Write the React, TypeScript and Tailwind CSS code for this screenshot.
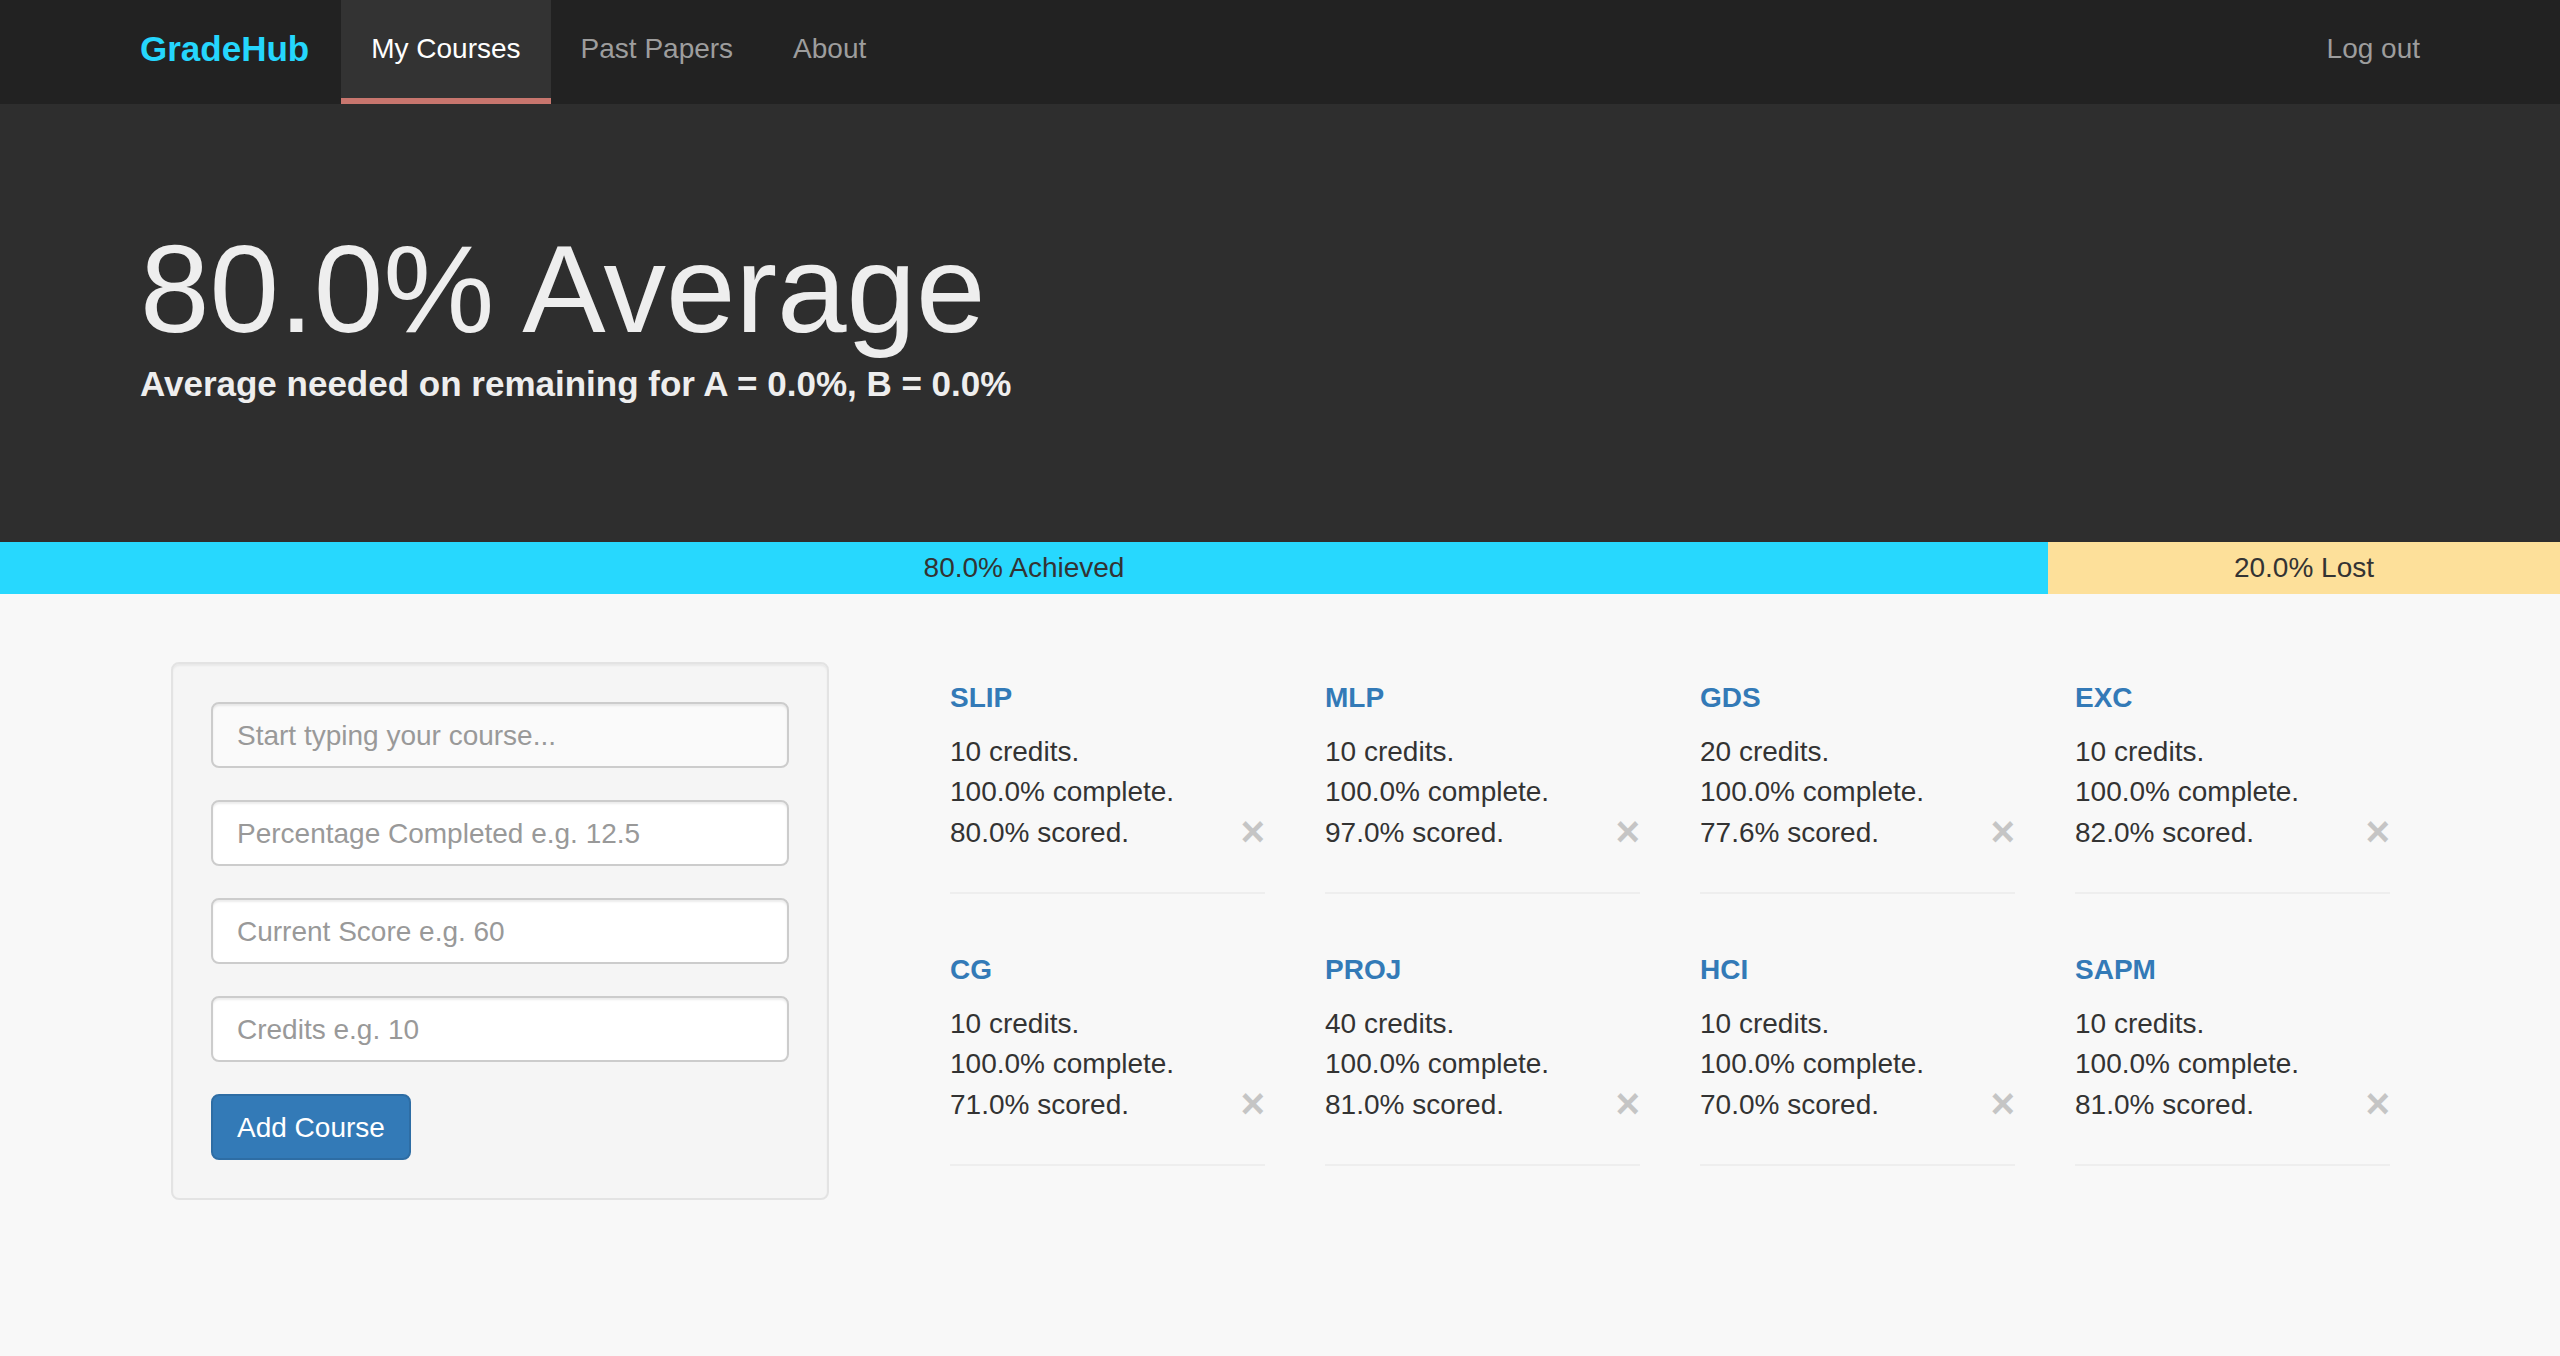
import React from 'react';

type Course = {
  code: string;
  credits: number;
  complete: string;
  scored: string;
};

const COURSES: Course[] = [
  { code: 'SLIP', credits: 10, complete: '100.0', scored: '80.0' },
  { code: 'MLP', credits: 10, complete: '100.0', scored: '97.0' },
  { code: 'GDS', credits: 20, complete: '100.0', scored: '77.6' },
  { code: 'EXC', credits: 10, complete: '100.0', scored: '82.0' },
  { code: 'CG', credits: 10, complete: '100.0', scored: '71.0' },
  { code: 'PROJ', credits: 40, complete: '100.0', scored: '81.0' },
  { code: 'HCI', credits: 10, complete: '100.0', scored: '70.0' },
  { code: 'SAPM', credits: 10, complete: '100.0', scored: '81.0' },
];

const NAV_LINKS = [
  { label: 'My Courses', active: true },
  { label: 'Past Papers', active: false },
  { label: 'About', active: false },
];

const FIELDS = [
  { placeholder: 'Start typing your course...', tinted: true },
  { placeholder: 'Percentage Completed e.g. 12.5', tinted: false },
  { placeholder: 'Current Score e.g. 60', tinted: false },
  { placeholder: 'Credits e.g. 10', tinted: false },
];

function CourseCard({ course }: { course: Course }) {
  return (
    <div className="px-[30px] mb-[56px]">
      <h4 className="text-[28px] leading-[40px] font-semibold text-[#337ab7] mb-[14px]">{course.code}</h4>
      <p className="text-[28px] leading-[40px] text-[#333]">{course.credits} credits.</p>
      <p className="text-[28px] leading-[40px] text-[#333]">{course.complete}% complete.</p>
      <div className="flex justify-between h-[40px]">
        <p className="text-[28px] leading-[40px] text-[#333] pt-[1px]">{course.scored}% scored.</p>
        <button className="text-[42px] leading-[40px] font-bold text-black opacity-20">×</button>
      </div>
      <hr className="mt-[40px] border-0 border-t-2 border-[#eeeeee]" />
    </div>
  );
}

export default function App() {
  return (
    <div className="min-h-screen bg-[#f8f8f8] font-['Liberation_Sans',Arial,sans-serif]">
      {/* Navbar */}
      <nav className="bg-[#222222] h-[104px]">
        <div className="w-[2340px] mx-auto px-[30px] h-full flex items-stretch">
          <a className="flex items-center pr-[32px] pb-[6px] text-[35px] font-bold text-[#25d6fd]">GradeHub</a>
          {NAV_LINKS.map((link) => (
            <a
              key={link.label}
              className={`flex items-center px-[30px] text-[28px] border-b-[6px] ${
                link.active
                  ? 'bg-[#333333] text-white border-[#c8766e]'
                  : 'text-[#9d9d9d] border-transparent'
              }`}
            >
              {link.label}
            </a>
          ))}
          <a className="ml-auto flex items-center pl-[30px] text-[28px] text-[#9d9d9d] border-b-[6px] border-transparent">
            Log out
          </a>
        </div>
      </nav>

      {/* Hero */}
      <section className="bg-[#2e2e2e] h-[438px]">
        <div className="w-[2340px] mx-auto px-[30px] pt-[122px]">
          <h1 className="text-[125px] leading-none text-[#eeeeee]">80.0% Average</h1>
          <h3 className="mt-[15px] text-[35px] leading-none font-bold text-[#eeeeee]">
            Average needed on remaining for A = 0.0%, B = 0.0%
          </h3>
        </div>
      </section>

      {/* Progress */}
      <div className="flex h-[52px] text-[28px] leading-[52px] text-[#333] text-center">
        <div className="w-[80%] bg-[#27d8fe]">80.0% Achieved</div>
        <div className="flex-1 bg-[#fde09a]">20.0% Lost</div>
      </div>

      {/* Main */}
      <main className="w-[2340px] mx-auto flex">
        <div className="w-[780px] px-[30px] pt-[68px]">
          <div className="mx-[31px] bg-[#f5f5f5] border-2 border-[#e3e3e3] rounded-[8px] p-[38px] shadow-[inset_0_2px_2px_rgba(0,0,0,0.05)]">
            <div className="flex flex-col gap-[32px]">
              {FIELDS.map((f) => (
                <input
                  key={f.placeholder}
                  placeholder={f.placeholder}
                  className={`h-[66px] w-full px-[24px] pt-[2px] text-[28px] text-[#555] placeholder:text-[#999] border-2 border-[#cccccc] rounded-[8px] outline-none shadow-[inset_0_2px_2px_rgba(0,0,0,0.075)] ${
                    f.tinted ? 'bg-[#fafafa]' : 'bg-white'
                  }`}
                />
              ))}
              <div>
                <button className="h-[66px] px-[24px] pt-[2px] text-[28px] text-white bg-[#337ab7] border-2 border-[#2e6da4] rounded-[8px]">
                  Add Course
                </button>
              </div>
            </div>
          </div>
        </div>
        <div className="w-[1560px] px-[30px] pt-[84px]">
          <div className="grid grid-cols-4">
            {COURSES.map((c) => (
              <CourseCard key={c.code} course={c} />
            ))}
          </div>
        </div>
      </main>
    </div>
  );
}
